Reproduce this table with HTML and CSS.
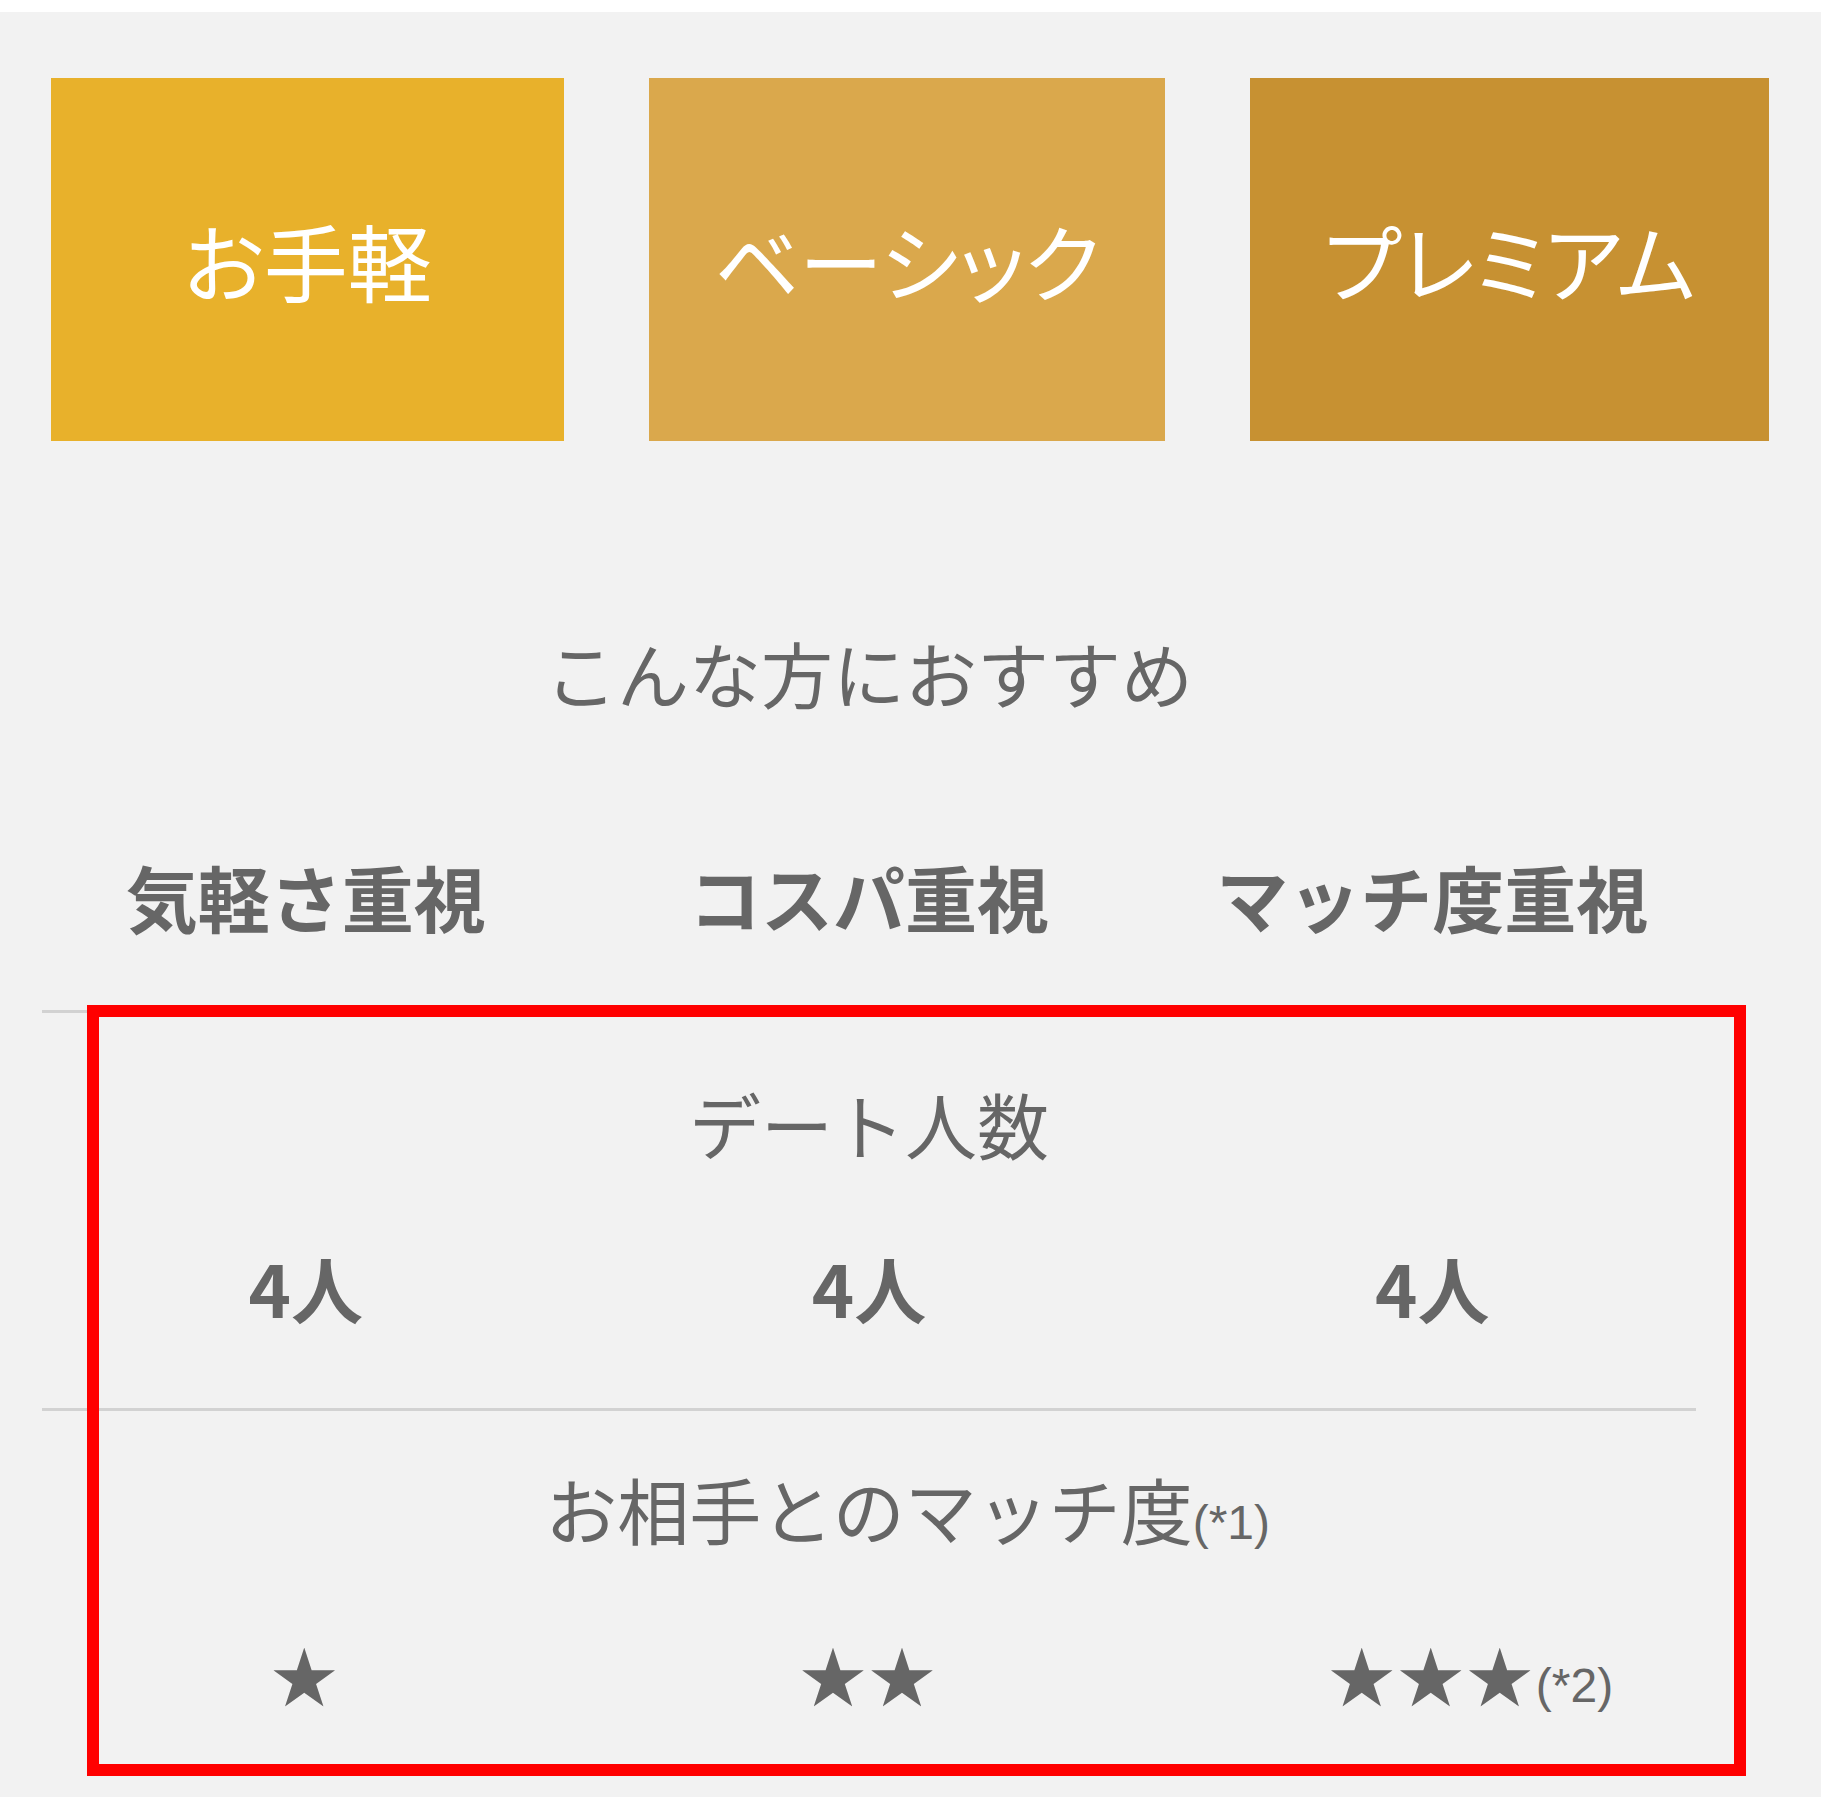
FILE: index.html
```html
<!DOCTYPE html>
<html lang="ja">
<head>
<meta charset="utf-8">
<title>プラン比較</title>
<link rel="stylesheet" href="styles.css">
</head>
<body>
<div class="topbar"></div>
<div class="plans">
  <div class="plan plan-easy">お手軽</div>
  <div class="plan plan-basic">ベーシック</div>
  <div class="plan plan-premium">プレミアム</div>
</div>
<section class="compare">
  <h2 class="reco">こんな方におすすめ</h2>
  <div class="cols heads">
    <div class="cell">気軽さ重視</div>
    <div class="cell">コスパ重視</div>
    <div class="cell">マッチ度重視</div>
  </div>
  <div class="divider"></div>
  <div class="row-title row-title-1">デート人数</div>
  <div class="cols vals">
    <div class="cell">4人</div>
    <div class="cell">4人</div>
    <div class="cell">4人</div>
  </div>
  <div class="divider divider-2"></div>
  <div class="row-title row-title-2">お相手とのマッチ度<span class="note"><span class="note-text">(*1)</span></span></div>
  <div class="cols stars">
    <div class="cell">★</div>
    <div class="cell">★★</div>
    <div class="cell">★★★<span class="note"><span class="note-text">(*2)</span></span></div>
  </div>
  <div class="highlight"></div>
</section>
</body>
</html>
```
FILE: styles.css
```css
html, body {
  margin: 0;
  padding: 0;
}
body {
  background: #f2f2f2;
  font-family: "Noto Sans CJK JP", "Noto Sans", sans-serif;
  color: #666666;
  height: 1797px;
  overflow: hidden;
}
.topbar {
  height: 12px;
  background: #ffffff;
}
.plans {
  display: flex;
  column-gap: 85px;
  margin: 66px 0 0 51px;
}
.plan {
  height: 363px;
  display: flex;
  align-items: center;
  justify-content: center;
  color: #ffffff;
  font-size: 84px;
  line-height: 1;
  font-weight: 400;
  font-feature-settings: "palt";
}
.plan-easy { width: 513px; background: #e8b12b; }
.plan-basic { width: 516px; background: #daa84c; }
.plan-premium { width: 519px; background: #c79132; }

.compare {
  position: relative;
  width: 1690px;
  margin-left: 24px;
  padding-top: 195px;
}
.reco {
  margin: 0;
  font-size: 72px;
  line-height: 72px;
  font-weight: 400;
  text-align: center;
}
.cols {
  display: grid;
  grid-template-columns: 1fr 1fr 1fr;
  text-align: center;
  line-height: 72px;
}
.heads {
  margin-top: 152px;
  font-size: 72px;
  font-weight: 700;
}
.divider {
  height: 3px;
  background: #d2d2d2;
  margin: 78px 18px 0;
}
.divider-2 {
  margin-top: 85px;
}
.row-title {
  font-size: 72px;
  line-height: 72px;
  text-align: center;
}
.row-title-1 { margin-top: 74px; }
.row-title-2 { margin-top: 61px; }
.vals {
  margin-top: 92px;
  font-size: 72px;
  font-weight: 700;
}
.stars {
  margin-top: 80px;
  font-size: 66px;
  line-height: 69px;
  letter-spacing: 3px;
}
.note {
  display: inline-block;
  width: 0;
  white-space: nowrap;
  letter-spacing: 0;
}
.note-text {
  font-family: "Liberation Sans", Arial, sans-serif;
  font-size: 48px;
  font-weight: 400;
  letter-spacing: 0;
}
.highlight {
  position: absolute;
  top: 564px;
  left: 63px;
  width: 1659px;
  height: 771px;
  box-sizing: border-box;
  border: 12px solid #ff0000;
}
```
